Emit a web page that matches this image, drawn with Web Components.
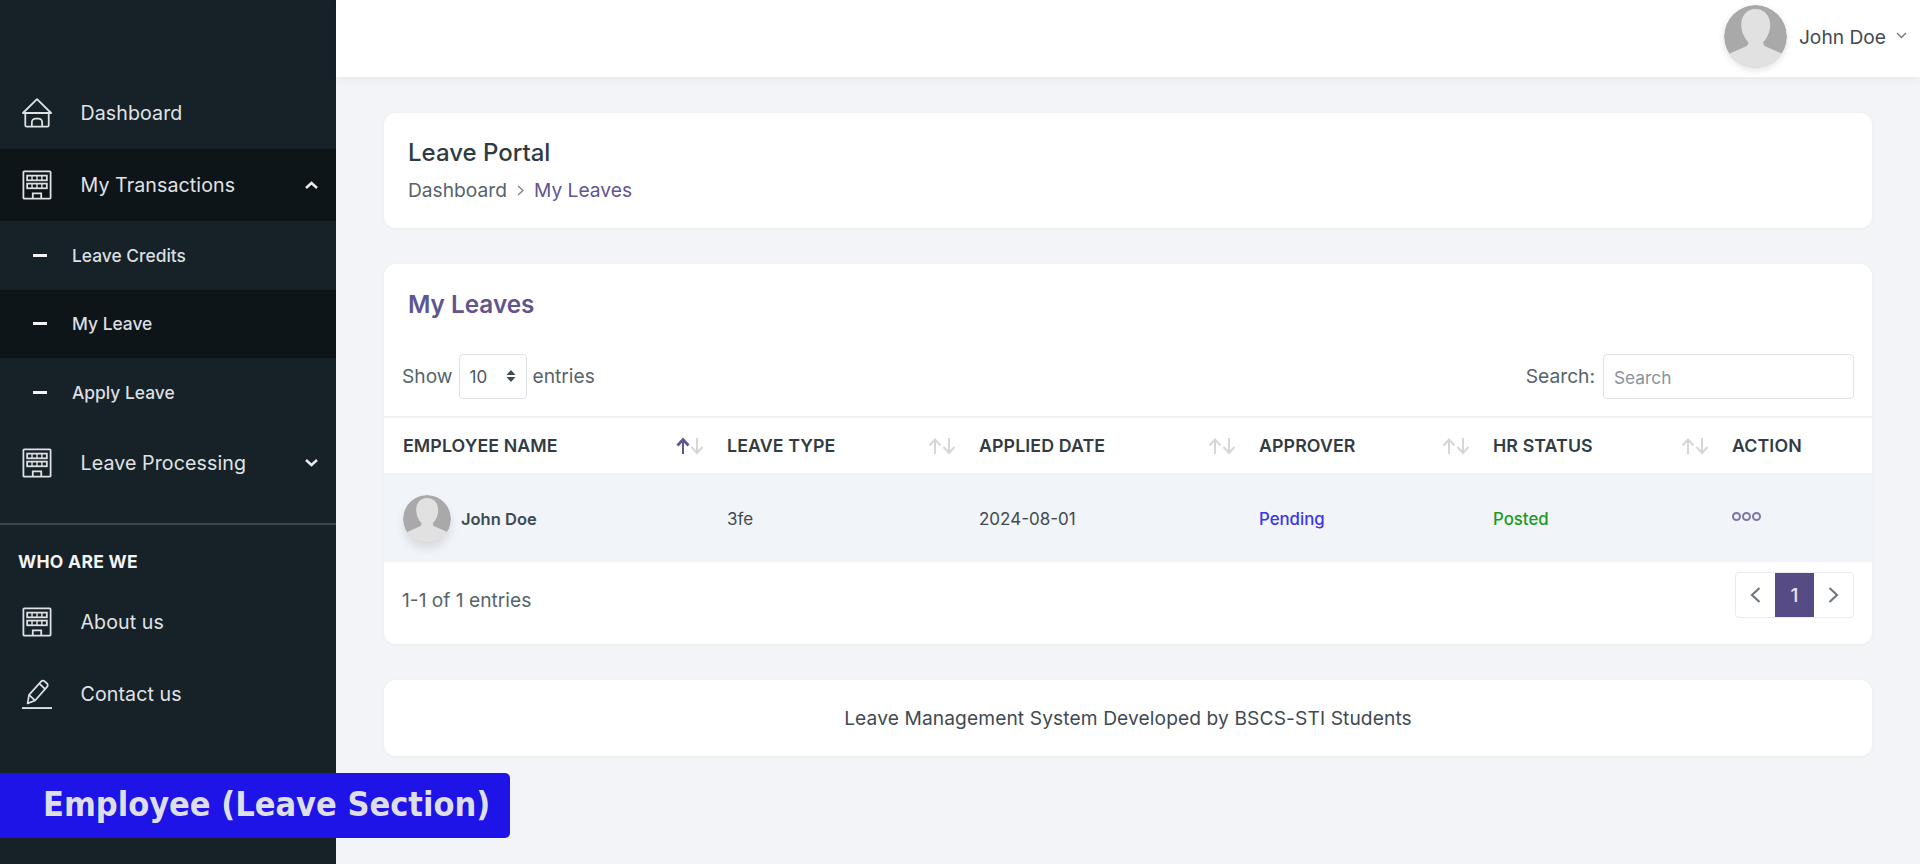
<!DOCTYPE html>
<html>
<head>
<meta charset="utf-8">
<title>My Leaves</title>
<style>
  html, body { margin: 0; height: 100%; }
  body { background: #f2f4f8; font-family: Inter, "Liberation Sans", sans-serif; overflow: hidden; }
  #app { display: flex; height: 864px; }
  #main { flex: 1; display: flex; flex-direction: column; min-width: 0; }
  #content { padding: 36px 48px 0; display: flex; flex-direction: column; gap: 36px; }
</style>
</head>
<body>
<div id="app">
  <app-sidebar>
    <nav-item icon="house" label="Dashboard"></nav-item>
    <nav-item icon="building" label="My Transactions" chevron="up" active></nav-item>
    <sub-item label="Leave Credits"></sub-item>
    <sub-item label="My Leave" active></sub-item>
    <sub-item label="Apply Leave"></sub-item>
    <nav-item icon="building" label="Leave Processing" chevron="down"></nav-item>
    <nav-heading label="WHO ARE WE"></nav-heading>
    <nav-item icon="building" label="About us"></nav-item>
    <nav-item icon="pencil" label="Contact us"></nav-item>
  </app-sidebar>
  <div id="main">
    <top-bar name="John Doe"></top-bar>
    <div id="content">
      <page-header></page-header>
      <leaves-table></leaves-table>
      <page-footer></page-footer>
    </div>
  </div>
</div>
<section-badge>Employee (Leave Section)</section-badge>

<script>
// icons shared by the elements below
const ICONS = {
  house: `<svg viewBox="0 0 32 32" fill="none" stroke="currentColor" stroke-width="1.900" stroke-linejoin="round"><path d="M1 16 16 1.200 31 16z"/><path d="M3.500 16v13a1.500 1.500 0 0 0 1.500 1.500h22a1.500 1.500 0 0 0 1.500-1.500V16"/><path d="M10.500 30.500V26a4 4 0 0 1 4-4h3a4 4 0 0 1 4 4v4.500"/></svg>`,
  building: `<svg viewBox="0 0 32 32" fill="none" stroke="currentColor" stroke-width="1.900"><rect x="1.500" y="1.500" width="29" height="29" rx="1"/><rect x="5.500" y="6" width="21" height="5"/><rect x="5.500" y="14.500" width="21" height="5"/><path d="M10.700 6v5M16 6v5M21.200 6v5M10.700 14.500v5M16 14.500v5M21.200 14.500v5" stroke-width="1.500"/><path d="M11.500 30.500V25h9v5.500"/></svg>`,
  pencil: `<svg viewBox="0 0 32 32" fill="none" stroke="currentColor" stroke-width="1.800" stroke-linejoin="round"><path d="M7.500 17 20.500 2.500a2.400 2.400 0 0 1 3.400-.2l2.800 2.500a2.400 2.400 0 0 1 .2 3.400L14 23l-8 3z"/><path d="M7.500 17l6.500 6M18.500 5l6.500 6"/><path d="M0 31h32" stroke-width="2"/></svg>`
};

const AVATAR = (size) => `<svg width="${size}" height="${size}" viewBox="0 0 62 62"><defs><clipPath id="c"><circle cx="31" cy="31" r="31"/></clipPath></defs><g clip-path="url(#c)"><rect width="62" height="62" fill="#a9a9a9"/><path d="M31 4c9 0 14.500 7 14.500 15.500 0 6-2.500 12.500-6.500 16.500-1 1.500 0 3.500 1.500 4.500l18 8V62H4V48.500l18-8c1.500-1 2.500-3 1.500-4.500-4-4-6.500-10.500-6.500-16.500C17 11 22 4 31 4z" fill="#e1e1e1"/></g></svg>`;

class AppSidebar extends HTMLElement {
  constructor() {
    super();
    this.attachShadow({ mode: 'open' });
    this.shadowRoot.innerHTML = `
      <style>
        :host { display: flex; flex-direction: column; width: 336px; flex: none; height: 864px; padding-top: 77px; box-sizing: border-box; background: #162128; color: #e8eaec; }
      </style>
      <slot></slot>`;
  }
}
customElements.define('app-sidebar', AppSidebar);

class NavItem extends HTMLElement {
  constructor() {
    super();
    this.attachShadow({ mode: 'open' });
  }
  connectedCallback() {
    const chevron = this.getAttribute('chevron');
    const points = chevron === 'up' ? '1,7 6.500,2 12,7' : '1,2 6.500,7 12,2';
    this.shadowRoot.innerHTML = `
      <style>
        :host { display: flex; align-items: center; height: 72px; padding: 0 16px 0 22px; box-sizing: border-box; font-size: 19.600px; letter-spacing: .1px; color: #e0e3e5; }
        :host([active]) { background: #0d1519; }
        .icon { width: 30px; height: 30px; margin-right: 28.500px; flex: none; display: block; color: #dfe2e4; }
        .icon svg { width: 30px; height: 30px; display: block; }
        .label { flex: 1; }
        .chevron { display: block; margin-right: 2px; }
      </style>
      <span class="icon">${ICONS[this.getAttribute('icon')]}</span>
      <span class="label">${this.getAttribute('label')}</span>
      ${chevron ? `<svg class="chevron" width="13" height="9" viewBox="0 0 13 9" fill="none" stroke="#e8eaec" stroke-width="2.500"><polyline points="${points}"/></svg>` : ''}`;
  }
}
customElements.define('nav-item', NavItem);

class SubItem extends HTMLElement {
  constructor() {
    super();
    this.attachShadow({ mode: 'open' });
  }
  connectedCallback() {
    this.shadowRoot.innerHTML = `
      <style>
        :host { display: flex; align-items: center; height: 68.500px; padding-left: 33px; box-sizing: border-box; font-size: 17.400px; font-weight: 500; color: #dcdfe1; }
        :host([active]) { background: #0d1519; }
        i { display: block; width: 14px; height: 3px; background: #f2f2f2; margin-right: 25px; }
      </style>
      <i></i><span>${this.getAttribute('label')}</span>`;
  }
}
customElements.define('sub-item', SubItem);

class NavHeading extends HTMLElement {
  constructor() {
    super();
    this.attachShadow({ mode: 'open' });
  }
  connectedCallback() {
    this.shadowRoot.innerHTML = `
      <style>
        :host { display: block; margin-top: 24px; border-top: 2px solid #3d474e; padding: 27px 18px 0; height: 34px; font-size: 17.500px; font-weight: 700; line-height: 20px; letter-spacing: .3px; color: #f2f3f4; }
      </style>
      ${this.getAttribute('label')}`;
  }
}
customElements.define('nav-heading', NavHeading);

class TopBar extends HTMLElement {
  constructor() {
    super();
    this.attachShadow({ mode: 'open' });
  }
  connectedCallback() {
    this.shadowRoot.innerHTML = `
      <style>
        :host { display: flex; align-items: center; justify-content: flex-end; height: 77px; background: #fff; padding-right: 13px; box-shadow: 0 2px 8px rgba(40,50,80,.06); font-size: 19.200px; color: #3f4a52; position: relative; }
        .pic { width: 63px; height: 63px; border-radius: 50%; overflow: hidden; margin-right: 12px; margin-top: -5px; box-shadow: 0 2px 6px rgba(0,0,0,.12); }
        .pic svg { display: block; }
        .name { margin-top: -3px; }
        .caret { margin-left: 10px; margin-top: -6px; }
      </style>
      <div class="pic">${AVATAR(63)}</div>
      <span class="name">${this.getAttribute('name')}</span>
      <svg class="caret" width="11" height="7" viewBox="0 0 11 7" fill="none" stroke="#6d7780" stroke-width="1.300"><polyline points="1,1 5.500,5.500 10,1"/></svg>`;
  }
}
customElements.define('top-bar', TopBar);

class PageHeader extends HTMLElement {
  constructor() {
    super();
    this.attachShadow({ mode: 'open' });
    this.shadowRoot.innerHTML = `
      <style>
        :host { display: block; background: #fff; border-radius: 12px; height: 115px; padding: 26px 24px 0; box-sizing: border-box; box-shadow: 0 1px 4px rgba(40,50,80,.04); }
        h1 { margin: 0 0 12px; font-size: 24px; line-height: 27px; font-weight: 500; color: #2f3b43; }
        .crumbs { display: flex; align-items: center; font-size: 19.200px; line-height: 24px; color: #56636b; }
        svg { margin: 0 10px 0 10px; }
        b { font-weight: 400; color: #5f5590; }
      </style>
      <h1>Leave Portal</h1>
      <div class="crumbs">Dashboard<svg width="7" height="11" viewBox="0 0 7 11" fill="none" stroke="#7c868d" stroke-width="1.300"><polyline points="1,1 6,5.500 1,10"/></svg><b>My Leaves</b></div>`;
  }
}
customElements.define('page-header', PageHeader);

class SortArrows extends HTMLElement {
  constructor() {
    super();
    this.attachShadow({ mode: 'open' });
  }
  connectedCallback() {
    const asc = this.hasAttribute('asc');
    const up = asc ? '#5f5590' : '#d3d6da';
    this.shadowRoot.innerHTML = `
      <style>:host { display: block; width: 28px; height: 18px; } svg { display: block; }</style>
      <svg width="28" height="18" viewBox="0 0 28 18" fill="none" stroke-width="2">
        <path d="M7 17V3" stroke="${up}"/>
        <path d="M1.500 8.500 7 2.500l5.500 6" stroke="${up}" stroke-width="${asc ? 2.800 : 2}"/>
        <path d="M21 1v15M15.500 10l5.500 6 5.500-6" stroke="#d3d6da"/>
      </svg>`;
  }
}
customElements.define('sort-arrows', SortArrows);

class LeavesTable extends HTMLElement {
  constructor() {
    super();
    this.attachShadow({ mode: 'open' });
  }
  connectedCallback() {
    const heads = [['EMPLOYEE NAME', true], ['LEAVE TYPE'], ['APPLIED DATE'], ['APPROVER'], ['HR STATUS']];
    const headCells = heads.map(([t, asc]) => `<div class="th"><span>${t}</span><sort-arrows ${asc ? 'asc' : ''}></sort-arrows></div>`).join('');
    this.shadowRoot.innerHTML = `
      <style>
        :host { display: block; background: #fff; border-radius: 12px; height: 380px; box-shadow: 0 1px 4px rgba(40,50,80,.04); overflow: hidden; font-size: 19.200px; color: #56636b; }
        h2 { margin: 0; padding: 25px 24px 0; height: 55px; font-size: 24.300px; line-height: 30px; font-weight: 600; color: #5f5590; }
        .tools { display: flex; justify-content: space-between; align-items: center; height: 80px; padding: 0 18px; margin-top: -8px; box-sizing: border-box; }
        .tools div { display: flex; align-items: center; }
        .select { display: flex; align-items: center; justify-content: space-between; width: 68px; height: 45px; box-sizing: border-box; border: 1px solid #dfe2e6; border-radius: 4px; margin: 0 6px; padding: 2px 10px 0 10px; font-size: 17px; color: #4b5760; }
        .select svg { margin-top: -2px; }
        .search { width: 251px; height: 45px; box-sizing: border-box; border: 1px solid #dfe2e6; border-radius: 4px; margin-left: 8px; padding: 2px 10px 0; font: inherit; font-size: 17.300px; outline: none; color: #4b5760; }
        .search::placeholder { color: #89939b; opacity: 1; }
        .grid { display: grid; grid-template-columns: 324px 252px 280px 234px 239px 1fr; }
        .th { display: flex; align-items: center; justify-content: space-between; height: 59px; box-sizing: border-box; padding: 0 4px 0 19px; border-top: 2px solid #eff1f6; border-bottom: 2px solid #eff1f6; font-size: 17.800px; font-weight: 600; color: #333c43; letter-spacing: .1px; }
        .td { display: flex; align-items: center; height: 87px; background: #f1f4f8; padding-left: 19px; font-size: 17px; font-weight: 400; color: #3f4a52; }
        .name { font-weight: 600; font-size: 16.500px; }
        .pic { width: 48px; height: 48px; border-radius: 50%; overflow: hidden; margin-right: 10px; box-shadow: 0 6px 10px rgba(0,0,0,.1); flex: none; }
        .pic svg { display: block; }
        .pending { color: #3b33f0; font-weight: 500; font-size: 16.800px; }
        .posted { color: #1c9a24; font-weight: 500; font-size: 16.800px; }
        .dots { display: flex; gap: 1px; margin-top: -4px; }
        .dots i { width: 5px; height: 5px; border: 2px solid #7d74a8; border-radius: 50%; }
        .foot { display: flex; justify-content: space-between; align-items: center; height: 76px; padding: 0 18px; }
        .pager { display: flex; height: 46px; border: 1px solid #e9ebef; border-radius: 4px; box-sizing: border-box; margin-top: -10px; }
        .pager span { width: 39px; display: flex; align-items: center; justify-content: center; }
        .pager .on { background: #574b85; color: #e8e6f0; font-weight: 500; font-size: 19px; }
      </style>
      <h2>My Leaves</h2>
      <div class="tools">
        <div>Show<span class="select">10<svg width="10" height="14" viewBox="0 0 10 14" fill="#3f4a52"><path d="M5 1 9.500 6H.5zM5 13 .5 8h9z"/></svg></span>entries</div>
        <div>Search:<input class="search" placeholder="Search"></div>
      </div>
      <div class="grid">
        ${headCells}<div class="th"><span>ACTION</span></div>
        <div class="td name"><span class="pic">${AVATAR(48)}</span>John Doe</div>
        <div class="td">3fe</div>
        <div class="td">2024-08-01</div>
        <div class="td pending">Pending</div>
        <div class="td posted">Posted</div>
        <div class="td"><span class="dots"><i></i><i></i><i></i></span></div>
      </div>
      <div class="foot">
        <span>1-1 of 1 entries</span>
        <div class="pager">
          <span><svg width="11" height="16" viewBox="0 0 11 16" fill="none" stroke="#6f7980" stroke-width="2.200"><polyline points="9.500,1 2,8 9.500,15"/></svg></span>
          <span class="on">1</span>
          <span><svg width="11" height="16" viewBox="0 0 11 16" fill="none" stroke="#6f7980" stroke-width="2.200"><polyline points="1.500,1 9,8 1.500,15"/></svg></span>
        </div>
      </div>`;
  }
}
customElements.define('leaves-table', LeavesTable);

class PageFooter extends HTMLElement {
  constructor() {
    super();
    this.attachShadow({ mode: 'open' });
    this.shadowRoot.innerHTML = `
      <style>
        :host { display: flex; align-items: center; justify-content: center; background: #fff; border-radius: 12px; height: 76px; font-size: 19.200px; color: #3f4a52; letter-spacing: .1px; box-shadow: 0 1px 4px rgba(40,50,80,.04); }
      </style>
      <slot>Leave Management System Developed by BSCS-STI Students</slot>`;
  }
}
customElements.define('page-footer', PageFooter);

class SectionBadge extends HTMLElement {
  constructor() {
    super();
    this.attachShadow({ mode: 'open' });
    this.shadowRoot.innerHTML = `
      <style>
        :host { position: absolute; left: 0; top: 773px; width: 510px; height: 65px; box-sizing: border-box; padding: 0 0 4px 43px; display: flex; align-items: center; background: #1f14e8; border-radius: 0 5px 5px 0; color: #dedee6; font-family: "DejaVu Sans", sans-serif; font-stretch: condensed; font-weight: 700; font-size: 34px; white-space: nowrap; }
      </style>
      <slot></slot>`;
  }
}
customElements.define('section-badge', SectionBadge);
</script>
</body>
</html>
